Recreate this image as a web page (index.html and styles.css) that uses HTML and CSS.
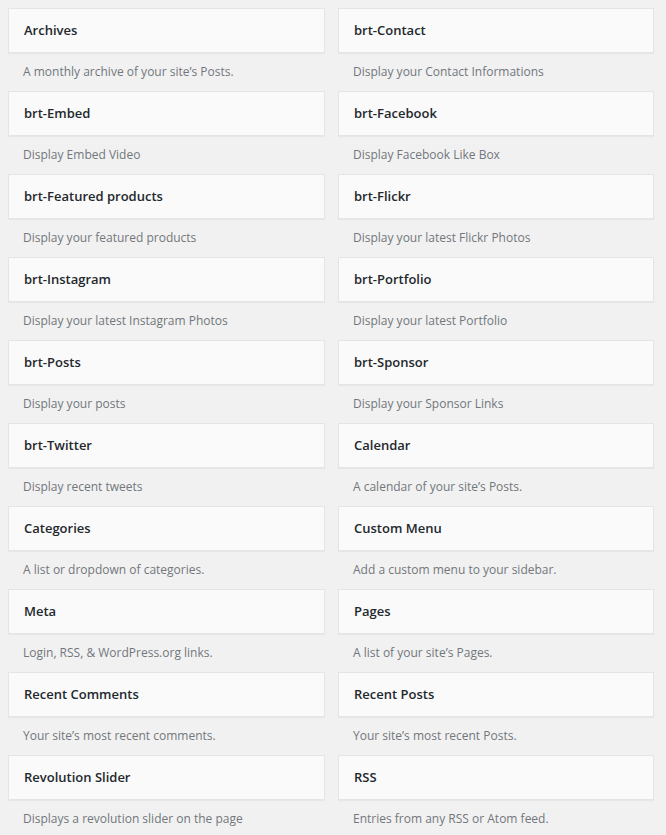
FILE: index.html
```html
<!DOCTYPE html>
<html>
<head>
<meta charset="utf-8">
<link rel="stylesheet" href="styles.css">
</head>
<body>
<div class="widget-list">
  <div class="widget"><div class="widget-top"><h3>Archives</h3></div><div class="widget-description">A monthly archive of your site’s Posts.</div></div>
  <div class="widget"><div class="widget-top"><h3>brt-Contact</h3></div><div class="widget-description">Display your Contact Informations</div></div>
  <div class="widget"><div class="widget-top"><h3>brt-Embed</h3></div><div class="widget-description">Display Embed Video</div></div>
  <div class="widget"><div class="widget-top"><h3>brt-Facebook</h3></div><div class="widget-description">Display Facebook Like Box</div></div>
  <div class="widget"><div class="widget-top"><h3>brt-Featured products</h3></div><div class="widget-description">Display your featured products</div></div>
  <div class="widget"><div class="widget-top"><h3>brt-Flickr</h3></div><div class="widget-description">Display your latest Flickr Photos</div></div>
  <div class="widget"><div class="widget-top"><h3>brt-Instagram</h3></div><div class="widget-description">Display your latest Instagram Photos</div></div>
  <div class="widget"><div class="widget-top"><h3>brt-Portfolio</h3></div><div class="widget-description">Display your latest Portfolio</div></div>
  <div class="widget"><div class="widget-top"><h3>brt-Posts</h3></div><div class="widget-description">Display your posts</div></div>
  <div class="widget"><div class="widget-top"><h3>brt-Sponsor</h3></div><div class="widget-description">Display your Sponsor Links</div></div>
  <div class="widget"><div class="widget-top"><h3>brt-Twitter</h3></div><div class="widget-description">Display recent tweets</div></div>
  <div class="widget"><div class="widget-top"><h3>Calendar</h3></div><div class="widget-description">A calendar of your site’s Posts.</div></div>
  <div class="widget"><div class="widget-top"><h3>Categories</h3></div><div class="widget-description">A list or dropdown of categories.</div></div>
  <div class="widget"><div class="widget-top"><h3>Custom Menu</h3></div><div class="widget-description">Add a custom menu to your sidebar.</div></div>
  <div class="widget"><div class="widget-top"><h3>Meta</h3></div><div class="widget-description">Login, RSS, &amp; WordPress.org links.</div></div>
  <div class="widget"><div class="widget-top"><h3>Pages</h3></div><div class="widget-description">A list of your site’s Pages.</div></div>
  <div class="widget"><div class="widget-top"><h3>Recent Comments</h3></div><div class="widget-description">Your site’s most recent comments.</div></div>
  <div class="widget"><div class="widget-top"><h3>Recent Posts</h3></div><div class="widget-description">Your site’s most recent Posts.</div></div>
  <div class="widget"><div class="widget-top"><h3>Revolution Slider</h3></div><div class="widget-description">Displays a revolution slider on the page</div></div>
  <div class="widget"><div class="widget-top"><h3>RSS</h3></div><div class="widget-description">Entries from any RSS or Atom feed.</div></div>
</div>
</body>
</html>
```
FILE: styles.css
```css
html, body {
  margin: 0;
  padding: 0;
  background: #f1f1f1;
}
body {
  padding: 8px;
  font-family: "Open Sans", "Liberation Sans", sans-serif;
  font-size: 13px;
  color: #444;
}
.widget-list {
  display: grid;
  grid-template-columns: 317px 316px;
  column-gap: 13px;
}
.widget-top {
  background: #fafafa;
  border: 1px solid #e5e5e5;
  box-shadow: 0 1px 1px rgba(0, 0, 0, 0.04);
}
.widget-top h3 {
  margin: 0;
  padding: 15px;
  font-size: 13px;
  line-height: 13px;
  font-weight: 600;
  color: #23282d;
}
.widget-description {
  padding: 9px 15px 9px;
  font-size: 12px;
  line-height: 20px;
  color: #72777c;
}
```
